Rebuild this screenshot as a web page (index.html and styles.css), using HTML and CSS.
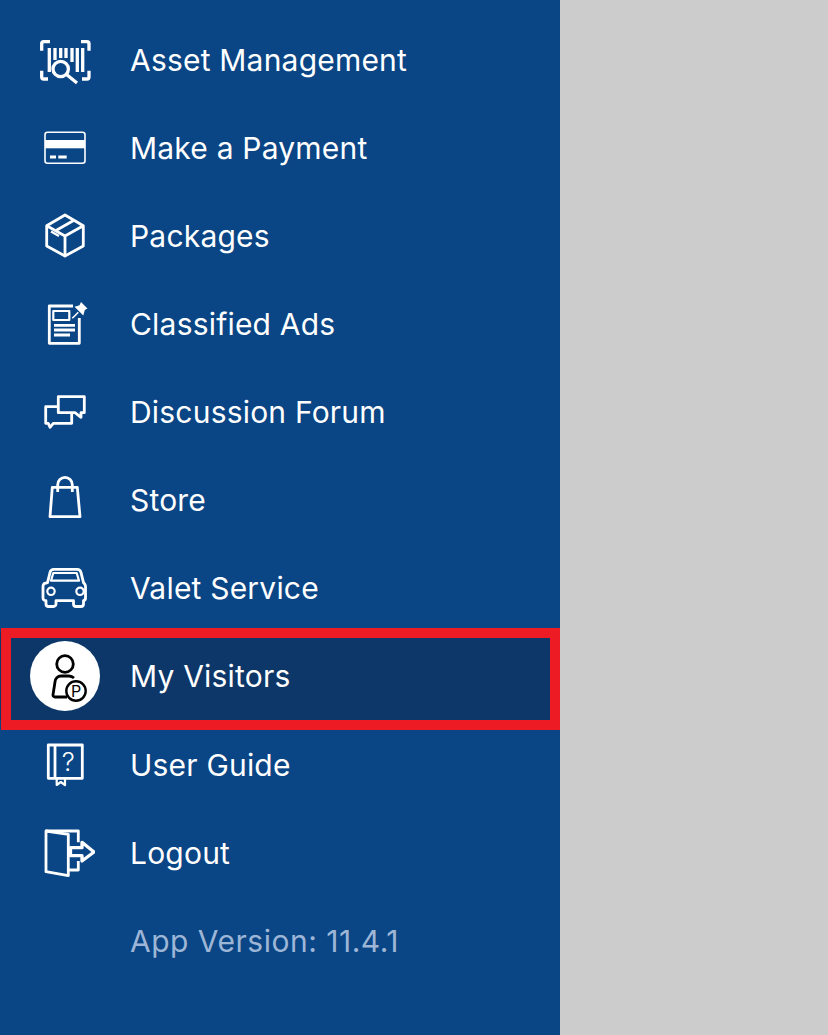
FILE: index.html
```html
<!DOCTYPE html>
<html lang="en">
<head>
<meta charset="utf-8">
<title>Menu</title>
<link rel="stylesheet" href="styles.css">
</head>
<body>
<div class="screen">
<nav class="drawer">
  <ul class="menu">
    <li class="item">
      <span class="slot"><svg class="icon" viewBox="0 0 60 60"><path class="bold" d="M15 11.700H8.700a2 2 0 0 0-2 2v7M46 11.700h6a2 2 0 0 1 2 2v7M6.700 40.700v6.300a2 2 0 0 0 2 2H13M54 40.700v6.300a2 2 0 0 1-2 2h-5"/><path class="bold" d="M14.300 18v24M20 18v12M25.700 18v10M31 18v10M37 18v14M42.300 18v24M47.700 18v24"/><circle class="bold" cx="25.700" cy="39" r="7.700"/><path class="bold" d="M31.500 44.500L42 53"/></svg></span>
      <span class="label">Asset Management</span>
    </li>
    <li class="item">
      <span class="slot"><svg class="icon" viewBox="0 0 60 60"><rect class="thin" x="10" y="14.300" width="40" height="31" rx="2.500"/><rect class="fill" x="10" y="22" width="40" height="8.300"/><path class="heavy" d="M15 39h6M23.300 39h8.400"/></svg></span>
      <span class="label">Make a Payment</span>
    </li>
    <li class="item">
      <span class="slot"><svg class="icon" viewBox="0 0 60 60"><path class="heavy" d="M30 9l18.300 10.700V40L30 50 11.700 40V19.700z"/><path class="heavy" d="M11.700 19.700L30 30l18.300-10.300M30 30v20"/><path class="heavy" d="M39 14.300L21 24.500"/><path d="M16 25.500l8 4.500"/></svg></span>
      <span class="label">Packages</span>
    </li>
    <li class="item">
      <span class="slot"><svg class="icon" viewBox="0 0 60 60"><path class="heavy" d="M38 12H14.300v37.300h30V24"/><rect x="18.300" y="17" width="16" height="9"/><path class="heavy" d="M19 31.300h21M19 36h21M19 41h16"/><path class="thin" d="M37.300 24.300l6-6"/><path class="fill" d="M46 8l6.500 6.500-2.700 1.500-1.500 5.500-8.800-8.800 5-1.500z"/></svg></span>
      <span class="label">Classified Ads</span>
    </li>
    <li class="item">
      <span class="slot"><svg class="icon" viewBox="0 0 60 60"><path class="heavy" d="M23.300 14.700h26v16H46v4.600l-6-4.600H23.300z"/><path class="heavy" d="M23.300 24.700H10.700v16.600h2.600l1.700 4 3.300-4h18.400V30.700"/></svg></span>
      <span class="label">Discussion Forum</span>
    </li>
    <li class="item">
      <span class="slot"><svg class="icon" viewBox="0 0 60 60"><path class="heavy" d="M17.300 17.300h25L45 46.700H15z"/><path class="heavy" d="M22.700 22v-7.300a7.300 7.300 0 0 1 14.600 0V22"/></svg></span>
      <span class="label">Store</span>
    </li>
    <li class="item">
      <span class="slot"><svg class="icon" viewBox="0 0 60 60"><path class="heavy" d="M12.500 24.700l2.500-10a4 4 0 0 1 4-3.400h23a4 4 0 0 1 4 3.400l2.500 10 1 1a4 4 0 0 1 1 3V40a2.700 2.700 0 0 1-2 2.700V46a2.500 2.500 0 0 1-2.500 2.500h-5a2.500 2.500 0 0 1-2.500-2.500v-3.300H21V46a2.500 2.500 0 0 1-2.500 2.500h-5A2.500 2.500 0 0 1 11 46v-3.300A2.700 2.700 0 0 1 8 40V28.700a4 4 0 0 1 1-3z"/><path d="M18.300 15h23.400l2.300 7.700H16z"/><circle cx="16" cy="33.300" r="3.700"/><circle cx="45" cy="33.300" r="3.700"/></svg></span>
      <span class="label">Valet Service</span>
    </li>
    <li class="item current">
      <span class="slot"><span class="badge"><svg class="icon dark" viewBox="0 0 60 60"><circle class="heavy" cx="30" cy="18" r="8.300"/><path class="heavy" d="M32 51H20a2 2 0 0 1-2-2.200L20 36a6 6 0 0 1 6-6h8a8 8 0 0 1 5 2"/><circle class="paper" cx="41" cy="45" r="9.700"/><text class="mark" x="41" y="51">P</text></svg></span></span>
      <span class="label">My Visitors</span>
      <span class="callout"></span>
    </li>
    <li class="item">
      <span class="slot"><svg class="icon" viewBox="0 0 60 60"><rect class="heavy" x="13.300" y="10" width="34" height="33.300"/><path class="heavy" d="M20 10v33.300"/><path d="M21.700 43.300V50l4.100-3 4.200 3v-6.700"/><text class="query" x="33.300" y="36">?</text></svg></span>
      <span class="label">User Guide</span>
    </li>
    <li class="item">
      <span class="slot"><svg class="icon" viewBox="0 0 60 60"><path class="heavy" d="M33.300 47h10V38M43.300 19.300V8H11"/><path class="heavy" d="M11 8l22.300 3.300v41.400L11 48.700z"/><path class="bold" d="M35.500 24.700H47v-5.400L59 29 47 38v-5.300H35.500z"/></svg></span>
      <span class="label">Logout</span>
    </li>
    <li class="item">
      <span class="slot"></span>
      <span class="label version">App Version: 11.4.1</span>
    </li>
  </ul>
</nav>
</div>
</body>
</html>
```
FILE: styles.css
```css
html, body {
  margin: 0;
  padding: 0;
}
.screen {
  display: flex;
  width: 828px;
  height: 1035px;
  overflow: hidden;
  background: #cccccc;
  font-family: Inter, "Liberation Sans", sans-serif;
}
.drawer {
  width: 560px;
  background: #0a4585;
}
.menu {
  list-style: none;
  margin: 0;
  padding: 16px 0 0;
}
.item {
  position: relative;
  display: flex;
  align-items: center;
  gap: 30px;
  height: 88px;
  padding-left: 30px;
}
.slot {
  display: flex;
  align-items: center;
  justify-content: center;
  flex: none;
  width: 70px;
  height: 70px;
}
.icon {
  display: block;
  width: 60px;
  height: 60px;
  fill: none;
  stroke: #ffffff;
  stroke-width: 2.2;
  stroke-linejoin: round;
}
.icon .thin {
  stroke-width: 1.6;
}
.icon .heavy {
  stroke-width: 2.8;
}
.icon .bold {
  stroke-width: 3.3;
}
.icon .fill {
  fill: #ffffff;
  stroke: none;
}
.icon .mark,
.icon .query {
  stroke: none;
  text-anchor: middle;
  font-family: Inter, "Liberation Sans", sans-serif;
  opacity: 0.99;
}
.icon .mark {
  fill: #000000;
  font-size: 16px;
}
.icon .query {
  fill: #ffffff;
  font-size: 26px;
  font-weight: 300;
}
.label {
  color: #ffffff;
  font-size: 30px;
  line-height: 36px;
  letter-spacing: 0.2px;
  white-space: nowrap;
}
.version {
  color: #9db6d6;
  letter-spacing: 0.5px;
}
.current {
  margin-bottom: 1px;
  background: #0c3768;
}
.badge {
  display: flex;
  align-items: center;
  justify-content: center;
  width: 70px;
  height: 70px;
  border-radius: 50%;
  background: #ffffff;
}
.icon.dark {
  stroke: #000000;
}
.icon .paper {
  fill: #ffffff;
  stroke-width: 2.4;
}
.callout {
  position: absolute;
  left: 1px;
  right: 0;
  top: -4px;
  height: 102px;
  box-sizing: border-box;
  border: 10px solid #ed1c24;
}
```
